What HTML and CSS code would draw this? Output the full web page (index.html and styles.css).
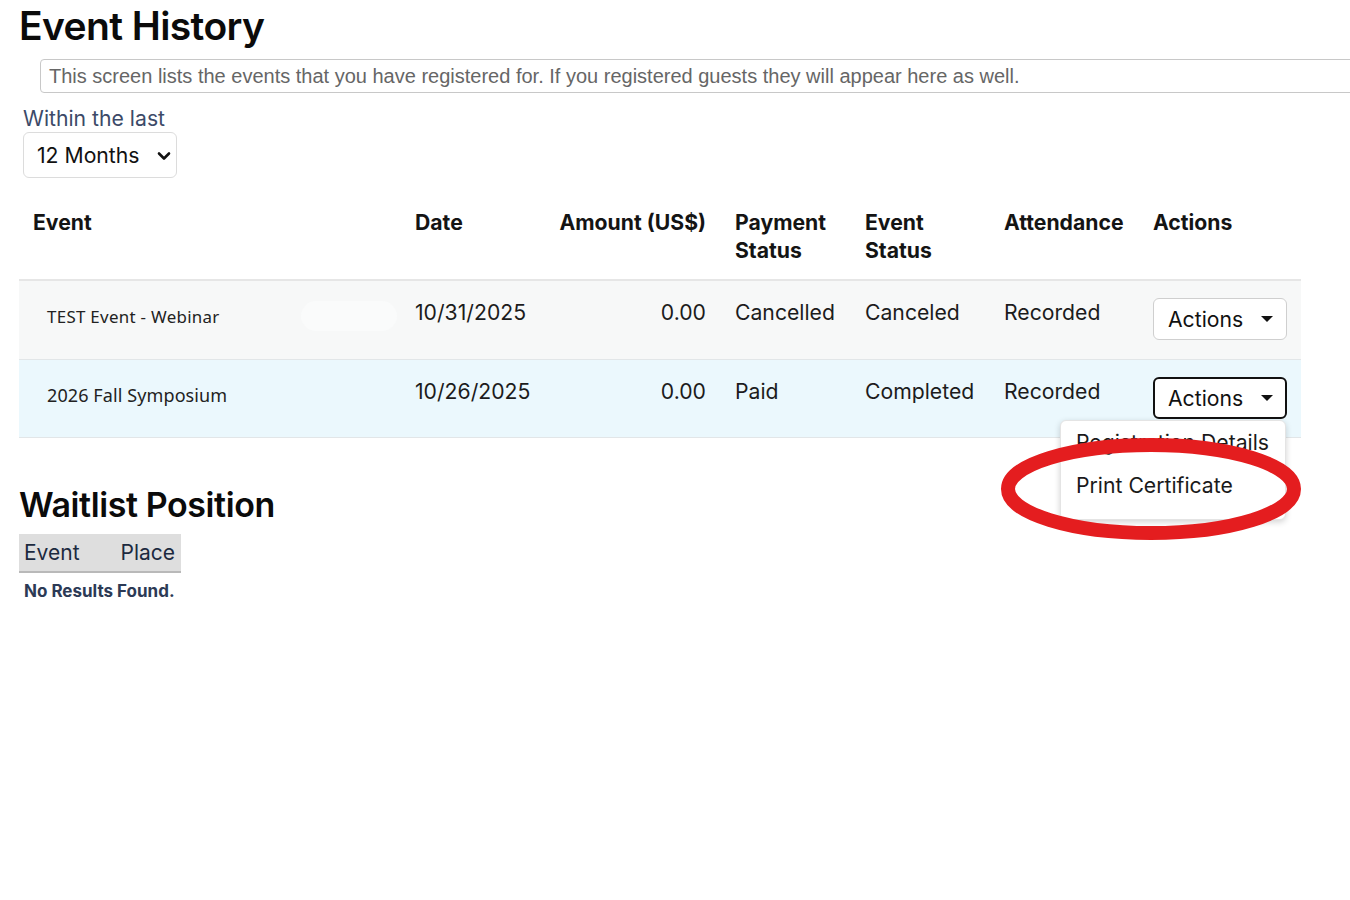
FILE: index.html
```html
<!DOCTYPE html>
<html lang="en">
<head>
<meta charset="utf-8">
<title>Event History</title>
<link rel="stylesheet" href="styles.css">
</head>
<body>
<main class="page">
  <h1 class="title">Event History</h1>
  <div class="info">This screen lists the events that you have registered for. If you registered guests they will appear here as well.</div>

  <div class="filter">
    <label class="filter-label" for="range">Within the last</label>
    <div class="select">
      <span>12 Months</span>
      <svg class="chev" width="14" height="10" viewBox="0 0 14 10"><path d="M2 2.5 L7 7.5 L12 2.5" fill="none" stroke="#111" stroke-width="2.6" stroke-linecap="round" stroke-linejoin="round"/></svg>
    </div>
  </div>

  <table class="history">
    <colgroup>
      <col class="c-event"><col class="c-date"><col class="c-amount"><col class="c-pay"><col class="c-status"><col class="c-att"><col class="c-act">
    </colgroup>
    <thead>
      <tr>
        <th>Event</th>
        <th>Date</th>
        <th class="num">Amount (US$)</th>
        <th>Payment<br>Status</th>
        <th>Event<br>Status</th>
        <th>Attendance</th>
        <th>Actions</th>
      </tr>
    </thead>
    <tbody>
      <tr class="row-grey">
        <td class="ev"><span class="ev-name">TEST Event - Webinar</span><span class="ghost"></span></td>
        <td>10/31/2025</td>
        <td class="num">0.00</td>
        <td>Cancelled</td>
        <td>Canceled</td>
        <td>Recorded</td>
        <td><button class="act">Actions <span class="caret"></span></button></td>
      </tr>
      <tr class="row-blue">
        <td class="ev"><span class="ev-name blue">2026 Fall Symposium</span></td>
        <td>10/26/2025</td>
        <td class="num">0.00</td>
        <td>Paid</td>
        <td>Completed</td>
        <td>Recorded</td>
        <td class="act-cell">
          <button class="act focused">Actions <span class="caret"></span></button>
          <div class="menu">
            <div class="menu-item">Registration Details</div>
            <div class="menu-item">Print Certificate</div>
          </div>
          <svg class="ring" width="304" height="106" viewBox="0 0 304 106"><ellipse cx="152" cy="52" rx="143" ry="44" fill="none" stroke="#e41d1f" stroke-width="14"/></svg>
        </td>
      </tr>
    </tbody>
  </table>

  <h2 class="subtitle">Waitlist Position</h2>
  <div class="wait-head"><span>Event</span><span>Place</span></div>
  <p class="empty">No Results Found.</p>
</main>
</body>
</html>
```

FILE: styles.css
```css
html, body {
  margin: 0;
  padding: 0;
  background: #fff;
  overflow: hidden;
}
body {
  font-family: Inter, "Liberation Sans", Arial, sans-serif;
  color: #1c1c1c;
}
.page {
  padding: 0 0 0 19px;
}
.title {
  margin: 0;
  padding-top: 3px;
  font-size: 39px;
  font-weight: 600;
  letter-spacing: -0.6px;
  line-height: 46px;
  color: #0b0b0b;
}
.info {
  margin: 10px 0 0 21px;
  width: 1320px;
  box-sizing: border-box;
  height: 34px;
  border: 1px solid #c8c8c8;
  border-radius: 4px;
  padding: 0 8px;
  font-family: "Liberation Sans", Arial, sans-serif;
  font-size: 20px;
  line-height: 32px;
  color: #666;
}
.filter {
  margin: 12px 0 0 4px;
  display: flex;
  flex-direction: column;
  align-items: flex-start;
}
.filter-label {
  font-size: 21.2px;
  line-height: 26px;
  color: #3c4a68;
}
.select {
  margin-top: 1px;
  width: 154px;
  height: 46px;
  box-sizing: border-box;
  border: 1px solid #dcdcdc;
  border-radius: 6px;
  display: flex;
  align-items: center;
  justify-content: space-between;
  padding: 0 5px 0 13px;
  font-size: 21.2px;
  color: #111;
}
.chev { margin-top: 1px; }

.history {
  margin-top: 17px;
  width: 1282px;
  border-collapse: collapse;
  table-layout: fixed;
}
.c-event { width: 382px; }
.c-date { width: 144px; }
.c-amount { width: 176px; }
.c-pay { width: 130px; }
.c-status { width: 139px; }
.c-att { width: 149px; }
.c-act { width: 162px; }

.history th {
  text-align: left;
  font-size: 21.2px;
  font-weight: 700;
  line-height: 28px;
  padding: 13px 14px 15px;
  vertical-align: top;
  color: #141414;
  border-bottom: 2px solid #e6e6e6;
}
.history td {
  font-size: 21.2px;
  line-height: 28px;
  padding: 17px 14px 19px;
  vertical-align: top;
  color: #1c1c1c;
  border-bottom: 1px solid #e2e6e8;
}
.history .num { text-align: right; padding-right: 15px; }
.row-grey td { background: #f7f8f8; }
.row-blue td { background: #ebf8fd; padding-bottom: 18px; }

.history td.ev {
  padding-left: 28px;
  padding-top: 20px;
  position: relative;
}
.ev-name {
  font-family: "Noto Sans", "Open Sans", sans-serif;
  font-size: 16.9px;
  line-height: 28px;
  color: #222;
  letter-spacing: 0.3px;
}
.ev-name.blue { font-size: 18px; letter-spacing: 0.1px; }
.ghost {
  position: absolute;
  left: 282px;
  top: 20px;
  width: 96px;
  height: 30px;
  border-radius: 15px;
  background: #fafbfb;
}

.act {
  width: 134px;
  height: 42px;
  box-sizing: border-box;
  background: #fff;
  border: 1px solid #cfcfcf;
  border-radius: 6px;
  font-family: Inter, sans-serif;
  font-size: 21.2px;
  color: #111;
  display: flex;
  align-items: center;
  justify-content: space-between;
  padding: 0 13px 0 14px;
  margin-top: 0;
}
.act.focused {
  border: 2px solid #111;
  padding: 0 12px 0 13px;
}
.caret {
  width: 0;
  height: 0;
  border-left: 6px solid transparent;
  border-right: 6px solid transparent;
  border-top: 6px solid #111;
}
.act-cell { position: relative; }
.menu {
  position: absolute;
  right: 15px;
  top: 60px;
  width: 226px;
  box-sizing: border-box;
  background: #fff;
  border: 1px solid #e4e4e4;
  border-radius: 6px;
  box-shadow: 0 2px 6px rgba(0,0,0,0.18);
  padding: 0 0 12px;
  z-index: 2;
}
.menu-item {
  font-size: 21.2px;
  line-height: 43px;
  padding: 0 15px;
  color: #1a1a1a;
  white-space: nowrap;
}
.ring {
  position: absolute;
  left: -140px;
  top: 77px;
  z-index: 3;
}

.subtitle {
  margin: 47px 0 0;
  font-size: 34px;
  font-weight: 600;
  letter-spacing: -0.4px;
  line-height: 40px;
  color: #0b0b0b;
}
.wait-head {
  margin-top: 9px;
  width: 162px;
  height: 39px;
  box-sizing: border-box;
  background: #dedede;
  border-bottom: 2px solid #b9b9b9;
  display: flex;
  justify-content: space-between;
  align-items: center;
  padding: 0 6px 0 5px;
  font-size: 21px;
  color: #1c2a3f;
}
.empty {
  margin: 8px 0 0 5px;
  font-size: 17px;
  font-weight: 700;
  color: #2c3a55;
}
```
